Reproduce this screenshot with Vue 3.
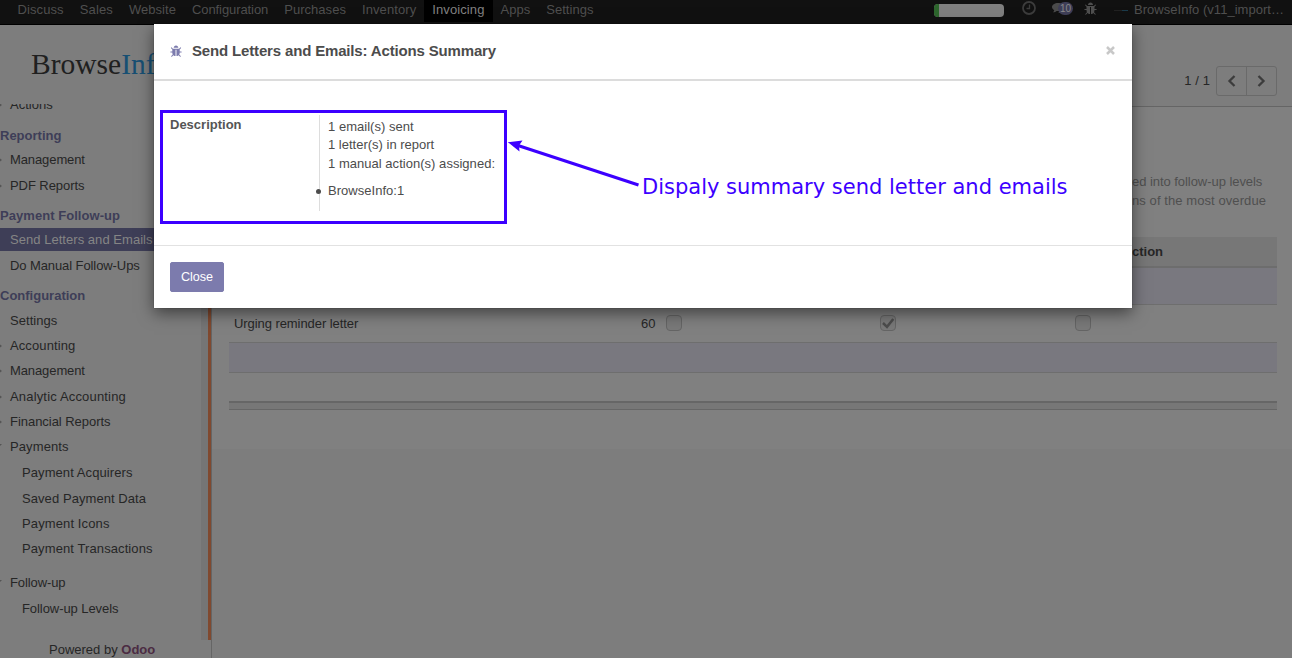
<script setup>
const apps = [
  { t: 'Discuss', s: 0.1 },
  { t: 'Sales', s: 0.15 },
  { t: 'Website', s: 0.03 },
  { t: 'Configuration', s: -0.08 },
  { t: 'Purchases', s: 0.03 },
  { t: 'Inventory', s: 0.1 },
  { t: 'Invoicing', s: 0.1 },
  { t: 'Apps', s: 0 },
  { t: 'Settings', s: 0.05 },
]
const menu = [
  { t: 'Actions', k: 'item', m: 'right', s: 0 },
  { t: 'Reporting', k: 'head', s: 0 },
  { t: 'Management', k: 'item', m: 'right', s: -0.1 },
  { t: 'PDF Reports', k: 'item', m: 'right', s: -0.07 },
  { t: 'Payment Follow-up', k: 'head', s: 0.05 },
  { t: 'Send Letters and Emails', k: 'item active', s: 0.04 },
  { t: 'Do Manual Follow-Ups', k: 'item', s: -0.09 },
  { t: 'Configuration', k: 'head', s: 0 },
  { t: 'Settings', k: 'item', s: 0.05 },
  { t: 'Accounting', k: 'item', m: 'right', s: 0.1 },
  { t: 'Management', k: 'item', m: 'right', s: -0.1 },
  { t: 'Analytic Accounting', k: 'item', m: 'right', s: 0.17 },
  { t: 'Financial Reports', k: 'item', m: 'right', s: -0.04 },
  { t: 'Payments', k: 'item', m: 'down', s: 0.1 },
  { t: 'Payment Acquirers', k: 'sub', s: 0.08 },
  { t: 'Saved Payment Data', k: 'sub', s: 0.07 },
  { t: 'Payment Icons', k: 'sub', s: 0.12 },
  { t: 'Payment Transactions', k: 'sub', s: 0.1 },
  { t: 'Follow-up', k: 'item', m: 'down', s: -0.1 },
  { t: 'Follow-up Levels', k: 'sub', s: -0.07 },
]
const bug = 'M1632 960q0 26-19 45t-45 19h-224q0 171-67 290l208 209q19 19 19 45t-19 45q-18 19-45 19t-45-19l-198-197q-5 5-15 13t-42 28.5-65 36.5-82 29-97 13v-896h-128v896q-51 0-101.5-13.5t-87-33-66-39-43.5-32.5l-15-14-183 207q-20 21-48 21-24 0-43-16-19-18-20.5-44.5t15.5-46.5l202-227q-58-114-58-274h-224q-26 0-45-19t-19-45 19-45 45-19h224v-294l-173-173q-19-19-19-45t19-45 45-19 45 19l173 173h844l173-173q19-19 45-19t45 19 19 45-19 45l-173 173v294h224q26 0 45 19t19 45zm-480-576h-640q0-133 93.5-226.500t226.500-93.500 226.500 93.500 93.500 226.500z'
</script>

<template>
  <div class="page">
    <header class="navbar">
      <nav class="apps">
        <span v-for="a in apps" :key="a.t" :class="['app', { current: a.t === 'Invoicing' }]" :style="{ letterSpacing: a.s + 'px' }">{{ a.t }}</span>
      </nav>
      <div class="systray">
        <div class="progress"><i></i></div>
        <svg class="clock" width="14" height="14" viewBox="0 0 14 14"><circle cx="7" cy="7" r="6" /><path d="M7.500 3.500V7.500H4.500" /></svg>
        <div class="chat">
          <svg width="16" height="14" viewBox="0 0 16 14"><path d="M6 1C2.700 1 0 2.700 0 5c0 1.400.9 2.500 2.200 3.200C2 9.200 1.500 9.700 1 10.200c1.500 0 2.800-.6 3.700-1.300H6c3.500 0 6-1.800 6-4S9.300 1 6 1z" /><path d="M13 4c0 4-4 6-7 6 1 1 3 1.500 5 1.300 1 .7 2.200 1.200 3.600 1.200-.6-.6-1-1-1.200-1.800C16 9 16 5.500 13 4z" /></svg>
          <b>10</b>
        </div>
        <svg class="traybug" width="13" height="14" viewBox="0 0 1664 1792"><path :d="bug" /></svg>
        <span class="avatar"></span>
        <span class="user">BrowseInfo (v11_import…</span>
      </div>
    </header>

    <div class="body">
      <aside class="sidebar">
        <div class="logo">Browse<span>Info</span></div>
        <div class="scroller">
          <ul class="menu">
            <li v-for="(e, i) in menu" :key="i" :class="e.k"><i v-if="e.m" :class="e.m"></i><span :style="{ letterSpacing: e.s + 'px' }">{{ e.t }}</span></li>
          </ul>
          <div class="track"></div>
        </div>
        <div class="powered">Powered by <b>Odoo</b></div>
      </aside>

      <main class="content">
        <div class="panel">
          <span class="count">1 / 1</span>
          <div class="pager">
            <span><svg width="10" height="12" viewBox="0 0 10 12"><path d="M7.500 1L2.500 6l5 5" /></svg></span>
            <span><svg width="10" height="12" viewBox="0 0 10 12"><path d="M2.500 1l5 5-5 5" /></svg></span>
          </div>
        </div>
        <div class="sheet">
          <div class="help"><p class="h1">ed into follow-up levels</p><p class="h2">ns of the most overdue</p></div>
          <div class="table">
            <div class="thead"><span>ction</span></div>
            <div class="row first"></div>
            <div class="row letter">
              <span class="name">Urging reminder letter</span>
              <span class="days">60</span>
              <span class="cell c1"><i class="check"></i></span>
              <span class="cell c2"><i class="check"><svg width="14" height="14" viewBox="0 0 14 14"><path d="M2 7l4 3.800L12.300 3" /></svg></i></span>
              <span class="cell"><i class="check"></i></span>
            </div>
            <div class="row shaded"></div>
            <div class="row blank"></div>
            <div class="tfoot"></div>
          </div>
        </div>
      </main>
    </div>

    <section class="modal">
      <div class="mhead">
        <svg class="debug" width="12" height="13" viewBox="0 0 1664 1792"><path :d="bug" /></svg>
        <h4>Send Letters and Emails: Actions Summary</h4>
        <svg class="close" width="9" height="9" viewBox="0 0 9 9"><path d="M1 1l7 7M8 1L1 8" /></svg>
      </div>
      <div class="mbody">
        <div class="frame">
          <label>Description</label>
          <div class="summary">
            <p>1 email(s) sent</p><p class="second">1 letter(s) in report</p><p>1 manual action(s) assigned:</p>
            <ul><li>BrowseInfo:1</li></ul>
          </div>
        </div>
        <svg class="arrow" width="136" height="60" viewBox="0 0 136 60"><path class="line" d="M11 9.500L131.500 49" /><path d="M.8 6.200L15.500 4.500L12 9.500L12.500 15.500z" /></svg>
        <div class="note">Dispaly summary send letter and emails</div>
      </div>
      <div class="mfoot"><button>Close</button></div>
    </section>
  </div>
</template>

<style>
body { margin: 0; overflow: hidden; }
</style>

<style scoped>
.page { width: 1292px; height: 658px; overflow: hidden; position: relative; font: 13px/18px "Liberation Sans", Arial, sans-serif; color: #262626; background: #7d7d7d; }
.page * { box-sizing: border-box; }
p, h4, ul { margin: 0; padding: 0; list-style: none; }
svg { display: block; }
.navbar { height: 25px; display: flex; justify-content: space-between; background: #111; border-bottom: 1px solid #000; color: #4f4f4f; }
.apps { display: flex; padding-left: 9.500px; }
.app { height: 22px; padding: 1px 8px 0; }
.current { background: #000; color: #808080; }
.systray { display: flex; width: 358px; }
.progress { width: 70px; height: 13px; margin-top: 4px; border-radius: 4px; overflow: hidden; background: #7f7f7f; }
.progress i { display: block; width: 5px; height: 13px; background: #2d662d; }
.clock { margin: 1px 0 0 18px; fill: none; stroke: #3c3c3c; stroke-width: 1.800; }
.clock path { stroke-width: 1.300; }
.chat { position: relative; width: 22px; margin: 2px 0 0 16px; fill: #4b4b4b; }
.chat b { position: absolute; left: 6px; top: 0; width: 15px; height: 13px; border-radius: 7px; background: #3e3e57; color: #888; font-size: 10px; font-weight: 400; line-height: 13px; text-align: center; }
.traybug { margin: 2px 0 0 10px; fill: #4f4f4f; }
.avatar { width: 14px; height: 1px; margin: 10px 0 0 17px; background: linear-gradient(90deg, #222 60%, #1b3b4b 60%); }
.user { margin: 1px 0 0 6px; white-space: nowrap; letter-spacing: .03px; }
.body { display: flex; height: 633px; }
.sidebar { width: 212px; border-right: 1px solid #656565; display: flex; flex-direction: column; }
.logo { flex: none; height: 79px; padding: 20px 0 0 31px; font: 29.500px/38px "Liberation Serif", serif; color: #202020; overflow: hidden; }
.logo span { color: #174f73; }
.scroller { flex: none; height: 536px; display: flex; overflow: hidden; }
.menu { width: 201px; height: 560px; margin-top: -11px; display: grid; grid-template-rows: 31px 24px 26px 30px 24px 26px 30px 25px 25px 25px 26px 25px 25px 26px 26px 25px 25px 34px 26px 24px; white-space: nowrap; }
.menu li { height: 24px; line-height: 24px; display: flex; align-items: center; position: relative; }
.menu .head { font-weight: 700; color: #3e3e58; }
.menu .item { padding-left: 10px; }
.menu .sub { padding-left: 22px; }
.menu .active { height: 23px; padding-top: 1px; background: #3e3e57; color: #858585; }
.menu i { position: absolute; left: -2px; top: 9px; border: 3px solid transparent; }
.menu .right { border-left: 4px solid #555; border-right: 0; }
.menu .down { border-top: 3px solid #555; border-bottom: 0; left: -4px; }
.track { width: 10px; flex: none; background: #757575; border-right: 3px solid #80492f; }
.powered { padding-left: 49px; line-height: 20px; height: 18px; white-space: nowrap; }
.powered b { color: #4b2c43; }
.content { flex: 1; }
.panel { height: 82px; padding: 41px 15px 0 0; display: flex; justify-content: flex-end; border-bottom: 1px solid #656565; }
.count { margin-right: 6px; line-height: 30px; letter-spacing: .1px; }
.pager { display: flex; width: 61px; height: 30px; border: 1px solid #6a6a6a; border-radius: 3px; }
.pager span { width: 29px; display: flex; align-items: center; justify-content: center; }
.pager span:last-child { width: 30px; border-left: 1px solid #6a6a6a; padding-right: 1px; }
.pager svg { fill: none; stroke: #3c3c3c; stroke-width: 2.300; }
.sheet { height: 342px; padding: 65px 15px 0 17px; background: #808080; }
.help { padding-left: 903px; height: 65px; line-height: 19px; color: #4f4f4f; white-space: nowrap; }
.h1 { letter-spacing: -.05px; }
.h2 { letter-spacing: .08px; }
.thead { height: 31px; background: #777; border-bottom: 2px solid #6d6d6d; font-weight: 700; line-height: 29px; padding-left: 903px; }
.row { border-bottom: 1px solid #6e6e6e; }
.first { height: 37px; background: #79787f; }
.letter { height: 38px; display: flex; line-height: 37px; }
.name { width: 412px; padding-left: 5px; letter-spacing: -.07px; }
.days { width: 25px; }
.cell { display: flex; align-items: center; }
.c1 { width: 214px; }
.c2 { width: 195px; }
.check { width: 16px; height: 16px; margin-top: -1px; border: 1px solid #656565; border-radius: 4px; background: #797979; }
.check path { fill: none; stroke: #4d4d4d; stroke-width: 2.500; }
.row.shaded { height: 30px; background: #79787f; }
.row.blank { height: 30px; border-bottom: 2px solid #666; }
.tfoot { height: 7px; background: #777; border-bottom: 1px solid #666; }
.modal { position: absolute; left: 154px; top: 24px; width: 978px; height: 284px; background: #fff; box-shadow: 0 5px 15px rgba(0,0,0,.5), 0 0 1px rgba(0,0,0,.4); color: #4c4c4c; }
.mhead { height: 57px; display: flex; align-items: center; padding: 0 17px 2px 16px; border-bottom: 2px solid #dcdcdc; }
.mhead .debug { fill: #7c7bad; margin-top: 1px; }
.mhead h4 { flex: 1; margin-left: 10px; padding-top: 1px; font-size: 15px; letter-spacing: -.16px; line-height: 20px; }
.mhead .close { fill: none; stroke: #c8c8c8; stroke-width: 2.500; }
.mbody { height: 164px; padding: 29px 0 0 6px; display: flex; }
.frame { width: 347px; height: 114px; border: 3px solid #3c00ff; padding: 2px 0 0 7px; display: flex; }
.frame label { width: 149px; font-weight: 700; line-height: 20px; color: #555; }
.summary { height: 96px; flex: 1; border-left: 1px solid #ddd; padding: 3px 0 0 8px; line-height: 18px; white-space: nowrap; letter-spacing: .03px; }
.summary .second { margin-bottom: 1px; letter-spacing: 0; }
.summary ul { margin-top: 9px; }
.summary li { position: relative; }
.summary li::before { content: ""; position: absolute; left: -12px; top: 7px; width: 5px; height: 5px; border-radius: 50%; background: #4c4c4c; }
.arrow { margin-top: 26px; fill: #3c00ff; }
.arrow .line { fill: none; stroke: #3c00ff; stroke-width: 3; }
.note { margin-top: 64px; margin-left: -1px; font: 21px/26px "DejaVu Sans", sans-serif; color: #3c00ff; white-space: nowrap; }
.mfoot { height: 63px; border-top: 1px solid #e2e2e2; padding: 16px; }
.mfoot button { display: block; width: 54px; height: 30px; padding: 0; border: 1px solid #7c7bad; border-radius: 2px; background: #7c7bad; color: #fff; font: 12.600px/18px "Liberation Sans", Arial, sans-serif; }
</style>
